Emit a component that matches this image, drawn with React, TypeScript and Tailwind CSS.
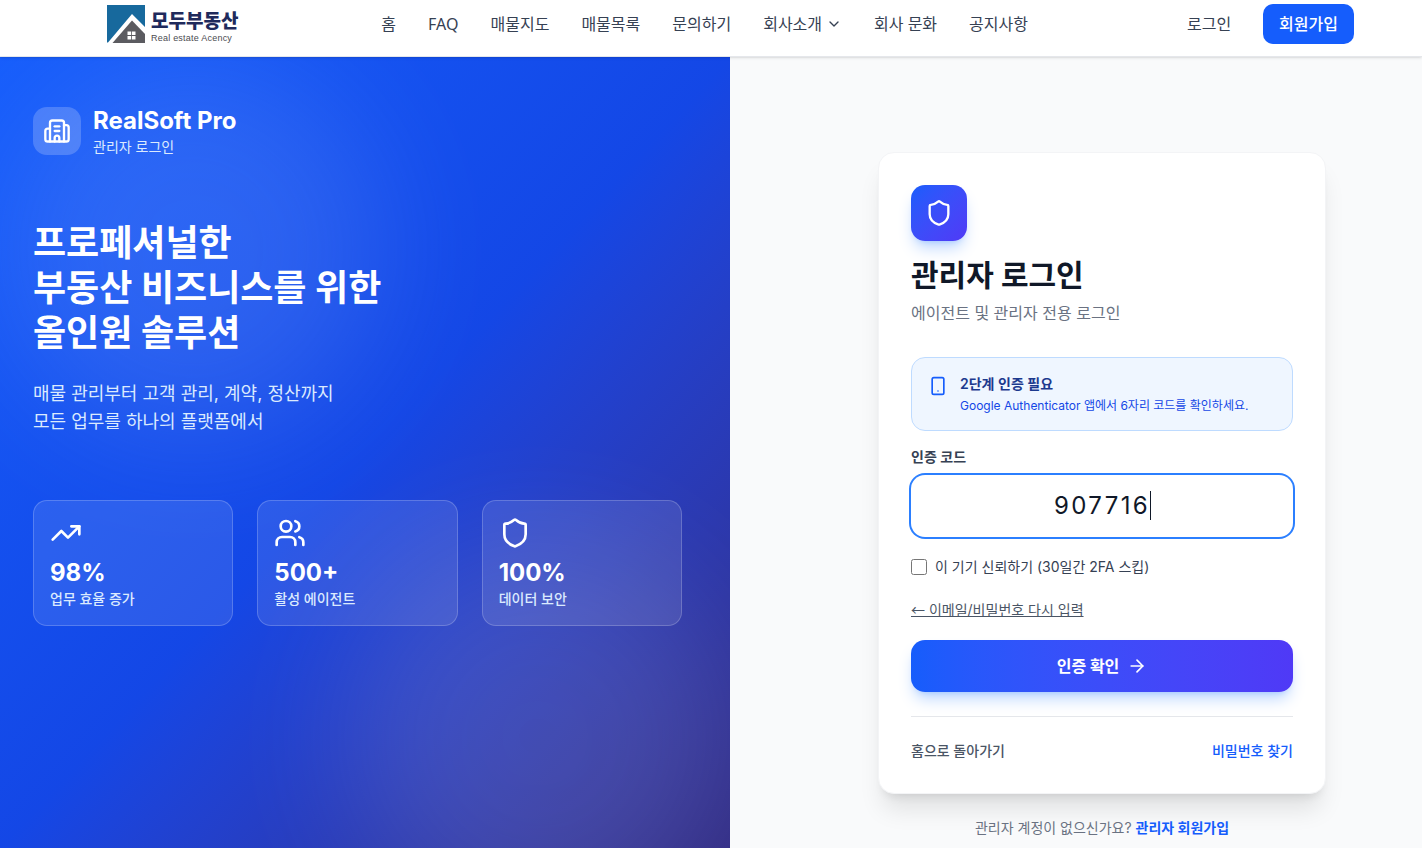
import React, { useState } from "react";
import { ArrowRight, Building2, ChevronDown, Shield, Smartphone, TrendingUp, Users } from "lucide-react";

const NAV_ITEMS = [
  { label: "홈" },
  { label: "FAQ" },
  { label: "매물지도" },
  { label: "매물목록" },
  { label: "문의하기" },
  { label: "회사소개", hasMenu: true },
  { label: "회사 문화" },
  { label: "공지사항" },
];

const STATS = [
  { icon: TrendingUp, value: "98%", label: "업무 효율 증가" },
  { icon: Users, value: "500+", label: "활성 에이전트" },
  { icon: Shield, value: "100%", label: "데이터 보안" },
];

function Logo() {
  return (
    <a href="#" className="flex items-center gap-1.5 shrink-0">
      <svg viewBox="0 0 38 38" className="w-[38px] h-[38px]" aria-hidden="true">
        <path d="M0 0H38V22L25 9L1 37.5H0Z" fill="#17699d" />
        <path d="M25 15.5L38 29V38H5.5Z" fill="#5b5b60" />
        <path d="M20.5 26.5h3.6v3.6h-3.6zM24.9 26.5h3.6v3.6h-3.6zM20.5 30.9h3.6v3.6h-3.6zM24.9 30.9h3.6v3.6h-3.6z" fill="#fff" />
      </svg>
      <span className="flex flex-col pt-1">
        <span className="text-[19px] leading-6 font-black text-[#1f2a5c]">모두부동산</span>
        <span className="font-['Liberation_Sans',sans-serif] text-[9px] leading-[10px] tracking-wide text-[#4b4b50]">Real estate Acency</span>
      </span>
    </a>
  );
}

function Header() {
  return (
    <header className="relative z-10 flex items-center bg-white border-b border-gray-200 shadow-sm pl-[107px] pr-[68px] pt-1 pb-3 font-['Noto_Sans','Noto_Sans_CJK_KR',sans-serif]">
      <Logo />
      <nav className="flex-1 flex justify-center gap-8 pr-4 text-gray-700">
        {NAV_ITEMS.map((item) => (
          <a key={item.label} href="#" className="flex items-center gap-1 whitespace-nowrap">
            {item.label}
            {item.hasMenu && <ChevronDown className="w-4 h-4" />}
          </a>
        ))}
      </nav>
      <div className="flex items-center gap-8 whitespace-nowrap">
        <a href="#" className="text-gray-700">로그인</a>
        <a href="#" className="bg-blue-600 text-white font-medium px-4 py-2 rounded-[10px]">회원가입</a>
      </div>
    </header>
  );
}

function BrandPanel() {
  return (
    <section className="relative w-[730px] shrink-0 overflow-hidden bg-linear-to-br from-blue-600 via-blue-700 to-indigo-900 text-white pl-[33px] pr-12 py-12">
      <div className="absolute top-0 left-0 w-96 h-96 bg-white rounded-full blur-3xl opacity-10 pointer-events-none" />
      <div className="absolute -bottom-20 right-0 w-96 h-96 bg-white rounded-full blur-3xl opacity-10 pointer-events-none" />

      <div className="relative">
        <div className="flex items-center gap-3 mb-16">
          <div className="w-12 h-12 rounded-[14px] bg-white/20 flex items-center justify-center">
            <Building2 className="w-7 h-7" />
          </div>
          <div>
            <p className="text-2xl font-bold">RealSoft Pro</p>
            <p className="text-sm text-blue-100">관리자 로그인</p>
          </div>
        </div>

        <h2 className="text-4xl leading-[45px] font-bold mb-6">
          프로페셔널한<br />부동산 비즈니스를 위한<br />올인원 솔루션
        </h2>
        <p className="text-lg leading-7 text-blue-100 mb-16">
          매물 관리부터 고객 관리, 계약, 정산까지<br />모든 업무를 하나의 플랫폼에서
        </p>

        <div className="grid grid-cols-3 gap-6">
          {STATS.map(({ icon: Icon, value, label }) => (
            <div key={label} className="bg-white/10 border border-white/20 rounded-[14px] p-4">
              <Icon className="w-8 h-8 mb-2" />
              <p className="text-2xl font-bold">{value}</p>
              <p className="text-sm font-medium text-blue-100">{label}</p>
            </div>
          ))}
        </div>
      </div>
    </section>
  );
}

function LoginCard() {
  const [code, setCode] = useState("907716");
  const [trusted, setTrusted] = useState(false);

  return (
    <form onSubmit={(e) => e.preventDefault()} className="bg-white border border-gray-100 rounded-2xl shadow-xl p-8">
      <div className="w-14 h-14 rounded-[14px] bg-linear-to-br from-blue-600 to-indigo-600 shadow-lg shadow-blue-500/30 flex items-center justify-center mb-4">
        <Shield className="w-7 h-7 text-white" />
      </div>
      <h1 className="text-3xl font-bold text-gray-900 mb-2">관리자 로그인</h1>
      <p className="text-gray-500 mb-8">에이전트 및 관리자 전용 로그인</p>

      <div className="flex items-start gap-3 bg-blue-50 border border-blue-200 rounded-[14px] p-4 mb-4">
        <Smartphone className="w-5 h-5 mt-0.5 text-blue-600 shrink-0" />
        <div>
          <p className="text-sm font-semibold text-blue-900">2단계 인증 필요</p>
          <p className="text-xs text-blue-700 mt-1">Google Authenticator 앱에서 6자리 코드를 확인하세요.</p>
        </div>
      </div>

      <label htmlFor="code" className="block text-sm font-semibold text-gray-700 mb-2">인증 코드</label>
      <div className="relative mb-5">
        <input
          id="code"
          type="text"
          inputMode="numeric"
          maxLength={6}
          value={code}
          onChange={(e) => setCode(e.target.value)}
          className="block w-full border border-transparent ring-2 ring-blue-500 rounded-[14px] px-4 py-[14px] text-2xl text-center tracking-widest text-gray-900 caret-transparent outline-none"
        />
        <span className="absolute left-1/2 top-4 ml-12 w-px h-[29px] bg-gray-900 pointer-events-none" />
      </div>

      <label className="flex items-center gap-2 text-sm text-gray-700 mb-[22px]">
        <input type="checkbox" checked={trusted} onChange={(e) => setTrusted(e.target.checked)} className="w-4 h-4" />
        이 기기 신뢰하기 (30일간 2FA 스킵)
      </label>

      <button type="button" className="block text-sm text-gray-600 underline mb-5">
        <span className="font-['Noto_Sans_CJK_KR',sans-serif]">←</span> 이메일/비밀번호 다시 입력
      </button>

      <button
        type="submit"
        className="w-full flex items-center justify-center gap-2 bg-linear-to-r from-blue-600 to-indigo-600 text-white font-bold py-[14px] rounded-[14px] shadow-lg shadow-blue-500/30"
      >
        인증 확인
        <ArrowRight className="w-5 h-5" />
      </button>

      <div className="flex justify-between border-t border-gray-200 mt-6 pt-6 text-sm font-medium">
        <a href="#" className="text-gray-600">홈으로 돌아가기</a>
        <a href="#" className="text-blue-600">비밀번호 찾기</a>
      </div>
    </form>
  );
}

export default function App() {
  return (
    <div className="min-h-screen flex flex-col bg-gray-50 font-['Inter','Noto_Sans_CJK_KR',sans-serif]">
      <Header />
      <main className="flex-1 flex">
        <BrandPanel />
        <section className="flex-1 flex justify-center pl-[52px] pt-[95px]">
          <div className="w-full max-w-md">
            <LoginCard />
            <p className="text-sm text-gray-500 text-center mt-6">
              관리자 계정이 없으신가요? <a href="#" className="font-bold text-blue-600">관리자 회원가입</a>
            </p>
          </div>
        </section>
      </main>
    </div>
  );
}
